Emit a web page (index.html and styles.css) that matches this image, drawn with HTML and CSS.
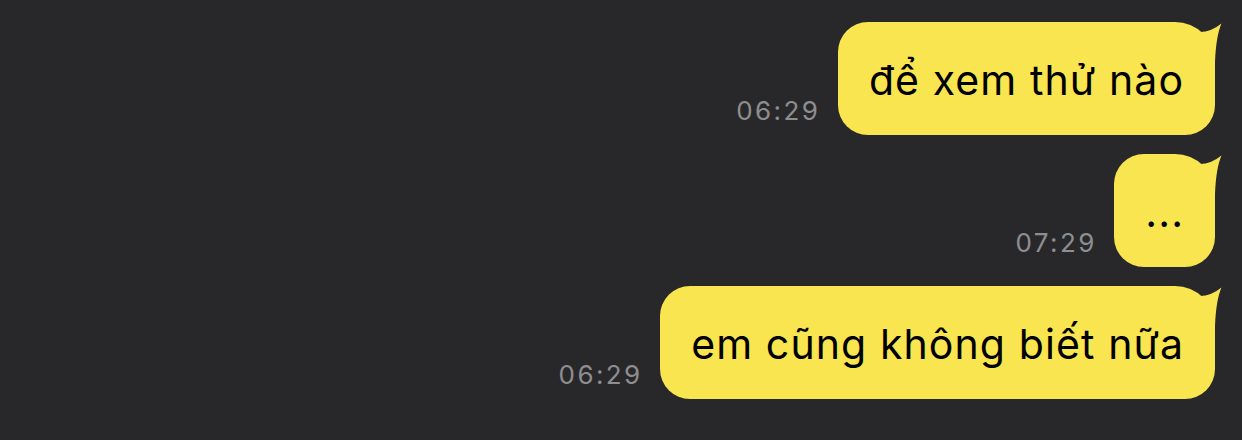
FILE: index.html
```html
<!DOCTYPE html>
<html lang="vi">
<head>
<meta charset="utf-8">
<title>Chat</title>
<link rel="stylesheet" href="styles.css">
</head>
<body>
<main class="chat">
  <div class="row">
    <span class="time">06:29</span>
    <div class="bubble">
      <span class="text">để xem thử nào</span>
      <svg class="tail" viewBox="0 0 30 45" width="30" height="45"><path d="M7 10 Q18 10 28.5 1.5 Q23 14 22 40 L8 40 Z"/></svg>
    </div>
  </div>
  <div class="row">
    <span class="time">07:29</span>
    <div class="bubble">
      <span class="text">...</span>
      <svg class="tail" viewBox="0 0 30 45" width="30" height="45"><path d="M7 10 Q18 10 28.5 1.5 Q23 14 22 40 L8 40 Z"/></svg>
    </div>
  </div>
  <div class="row">
    <span class="time">06:29</span>
    <div class="bubble">
      <span class="text">em cũng không biết nữa</span>
      <svg class="tail" viewBox="0 0 30 45" width="30" height="45"><path d="M7 10 Q18 10 28.5 1.5 Q23 14 22 40 L8 40 Z"/></svg>
    </div>
  </div>
</main>
</body>
</html>
```

FILE: styles.css
```css
html, body {
  margin: 0;
  padding: 0;
  background: #28282a;
  height: 100%;
  overflow: hidden;
}

.chat {
  display: flex;
  flex-direction: column;
  align-items: flex-end;
  gap: 19px;
  padding: 22px 27px 0 0;
  font-family: Inter, "Noto Sans", "Liberation Sans", sans-serif;
}

.row {
  display: flex;
  align-items: flex-end;
  gap: 20px;
}

.time {
  font-size: 26px;
  line-height: 30px;
  letter-spacing: 2.4px;
  margin-right: -2.4px;
  color: #8e8e91;
  margin-bottom: 9px;
}

.bubble {
  position: relative;
  background: #f9e550;
  color: #000;
  border-radius: 30px 40px 30px 30px;
  padding: 34px 32px 30px 31px;
}

.text {
  display: block;
  font-size: 41px;
  line-height: 49px;
  letter-spacing: 1.1px;
  margin-right: -1.1px;
  white-space: nowrap;
}

.tail {
  position: absolute;
  top: 0;
  right: -8px;
  fill: #f9e550;
  display: block;
}
```
